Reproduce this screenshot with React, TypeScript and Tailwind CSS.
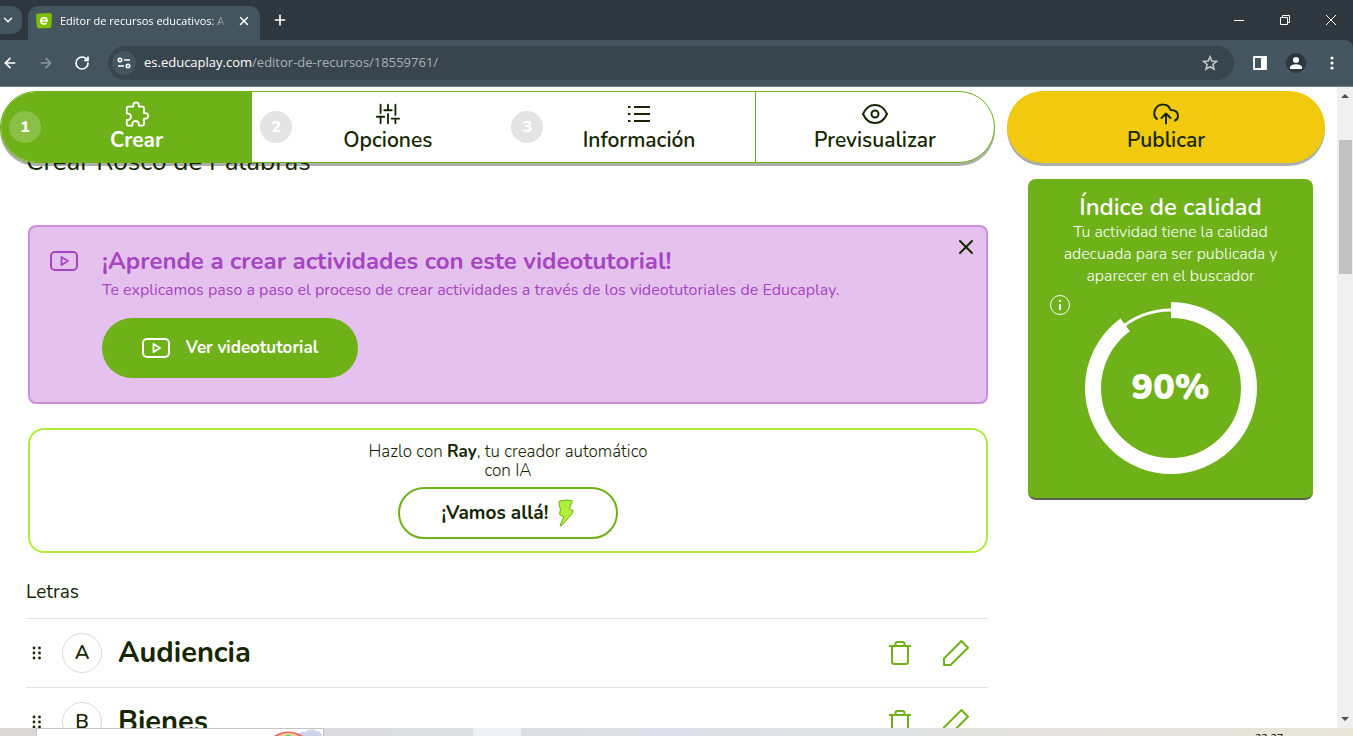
import React from 'react';
import { ArrowLeft, ArrowRight, ChevronDown, Plus, RotateCw, X } from 'lucide-react';

type IconProps = { className?: string };

const PuzzleIcon = ({ className }: IconProps) => (
  <svg viewBox="0 0 26 28" className={className} fill="none" stroke="currentColor" strokeWidth="2" strokeLinejoin="round">
    <path d="M2 9.500V7.500Q2 6 3.500 6H9V4.500a3 3 0 0 1 6 0V6h4Q20.500 6 20.500 7.500V13h1.500a3 3 0 0 1 0 6H20.500v5.500q0 2-1.500 2H15V25a3.500 3.500 0 0 0-7 0v1.500H3.500q-1.500 0-1.500-1.500v-4.500h1a3.500 3.500 0 0 0 0-7H2z" />
  </svg>
);

const SlidersIcon = ({ className }: IconProps) => (
  <svg viewBox="0 0 28 24" className={className} fill="none" stroke="currentColor" strokeWidth="2" strokeLinecap="round">
    <path d="M6 2v9M2 15h8M6 15v7M14 2v6M10 8h8M14 12v10M22 2v11M18 17h8M22 17v5" />
  </svg>
);

const ListIcon = ({ className }: IconProps) => (
  <svg viewBox="0 0 26 24" className={className} fill="none" stroke="currentColor" strokeWidth="2">
    <path d="M2 5h2.500M2 12h2.500M2 19h2.500M8 5h16M8 12h16M8 19h16" />
  </svg>
);

const EyeIcon = ({ className }: IconProps) => (
  <svg viewBox="0 0 26 20" className={className} fill="none" stroke="currentColor" strokeWidth="2" strokeLinejoin="round">
    <path d="M1 10C6.500-2 19.500-2 25 10C19.500 22 6.500 22 1 10Z" />
    <circle cx="13" cy="10" r="3.500" />
  </svg>
);

const CloudIcon = ({ className }: IconProps) => (
  <svg viewBox="0 0 26 22" className={className} fill="none" stroke="currentColor" strokeWidth="2" strokeLinecap="round" strokeLinejoin="round">
    <path d="M4 16C1 14 1 11 1.500 8.500C3 3 7 1 10.500 1.500C14 1.500 16.500 4 17.500 7C22.500 7 25 9.500 25 13C25 15 24 16.500 22 17.500" />
    <path d="M13 20.500V11M8.500 15L13 10.500L17.500 15" />
  </svg>
);

const VideoIcon = ({ className }: IconProps) => (
  <svg viewBox="0 0 28 20" className={className} fill="none" stroke="currentColor" strokeWidth="2" strokeLinejoin="round">
    <rect x="1" y="1" width="26" height="18" rx="4" />
    <path d="M11.500 6L18 10L11.500 14Z" strokeWidth="1.800" />
  </svg>
);

const BoltIcon = ({ className }: IconProps) => (
  <svg viewBox="0 0 16 28" className={className} fill="#b2ef38" stroke="#6eb119" strokeWidth="1" strokeLinejoin="round">
    <path d="M1.500 2Q7 .3 14 1.500Q15 2.500 13.500 4L11.500 9.500Q13 11 15 11.500Q15.500 13 13 16L3 27L2 26.500L6 17.500Q2 17 1.500 15L2.500 10Q1 7 1 4Z" />
  </svg>
);

const TrashIcon = ({ className }: IconProps) => (
  <svg viewBox="0 0 22 24" className={className} fill="none" stroke="currentColor" strokeWidth="2">
    <path d="M0 5h22M6.500 5V3q0-2 2-2h5q2 0 2 2v2M3 5v15.500q0 2.500 2.500 2.500h11q2.500 0 2.500-2.500V5" />
  </svg>
);

const PencilIcon = ({ className }: IconProps) => (
  <svg viewBox="0 0 26 26" className={className} fill="none" stroke="currentColor" strokeWidth="2" strokeLinejoin="round">
    <path d="M1 18.500V25H7.500L25 7.800L18.500 1Z" />
  </svg>
);

const DotsIcon = ({ className }: IconProps) => (
  <svg viewBox="0 0 10 14" className={className} fill="currentColor">
    {[2, 7, 12].map((y) => (
      <React.Fragment key={y}>
        <circle cx="2" cy={y} r="1.400" />
        <circle cx="7.500" cy={y} r="1.400" />
      </React.Fragment>
    ))}
  </svg>
);

const tabs = [
  { step: 1, label: 'Crear', icon: PuzzleIcon, active: true },
  { step: 2, label: 'Opciones', icon: SlidersIcon },
  { step: 3, label: 'Información', icon: ListIcon },
  { label: 'Previsualizar', icon: EyeIcon, divider: true },
];

const words = [
  { letter: 'A', word: 'Audiencia' },
  { letter: 'B', word: 'Bienes' },
];

const BrowserBar = () => (
  <header className="shrink-0 bg-[#2d373d] font-['Open_Sans',sans-serif] text-white">
    <div className="flex h-10 items-end">
      <button aria-label="Buscar pestañas" className="mb-1.5 flex h-7 w-[22px] items-center justify-center rounded-r-[10px] bg-[#44555f]">
        <ChevronDown className="mr-1.5 size-3.5" strokeWidth={2.500} />
      </button>
      <div className="ml-1.5 flex h-[34px] w-[232px] items-center rounded-t-[10px] bg-[#44555f] pr-1.5 pb-1 pl-2">
        <svg viewBox="0 0 16 16" className="size-4 shrink-0">
          <path d="M2 .5L14 0Q16 0 16 2L15.500 13Q15.500 15 13.500 15L3 15.500Q1 15.500 .7 13L0 3Q0 .8 2 .5Z" fill="#7cc000" />
          <path d="M4.800 8h6.300Q11 4.800 8 4.800T4.800 8Q5 11 8 11Q9.500 11 10.600 10.300" fill="none" stroke="#fff" strokeWidth="1.700" />
        </svg>
        <span className="ml-2 w-[168px] overflow-hidden [mask-image:linear-gradient(to_right,black_90%,transparent)] text-[11px] whitespace-nowrap">
          Editor de recursos educativos: A
        </span>
        <button aria-label="Cerrar pestaña" className="ml-auto flex size-5 items-center justify-center">
          <X className="size-3.5" strokeWidth={2.500} />
        </button>
      </div>
      <button aria-label="Nueva pestaña" className="mb-3 ml-3">
        <Plus className="size-4" strokeWidth={2.500} />
      </button>
      <div className="mb-[15px] ml-auto flex items-center gap-9 pr-[17px]">
        <button aria-label="Minimizar">
          <svg viewBox="0 0 10 10" className="size-2.5" stroke="#fff"><path d="M0 5.500h10" /></svg>
        </button>
        <button aria-label="Restaurar">
          <svg viewBox="0 0 10 10" className="size-2.5" fill="none" stroke="#fff"><path d="M.5 2.500h7v7h-7zM2.500 2.500v-2h7v7h-2" /></svg>
        </button>
        <button aria-label="Cerrar">
          <svg viewBox="0 0 10 10" className="size-2.5" stroke="#fff"><path d="M0 0l10 10M10 0L0 10" /></svg>
        </button>
      </div>
    </div>
    <div className="flex h-[47px] items-center rounded-tr-lg border-b border-[#71818b] bg-[#44555f]">
      <button aria-label="Atrás" className="ml-0.5"><ArrowLeft className="size-4" strokeWidth={2.500} /></button>
      <button aria-label="Adelante" className="ml-5 text-[#8a969d]"><ArrowRight className="size-4" strokeWidth={2.500} /></button>
      <button aria-label="Recargar" className="ml-5"><RotateCw className="size-4" strokeWidth={2.500} /></button>
      <div className="ml-[18px] flex h-[34px] flex-1 items-center rounded-full bg-[#39454c] px-1">
        <span className="flex size-6 items-center justify-center rounded-full bg-[#44555f]">
          <svg viewBox="0 0 14 12" className="h-3 w-3.5" fill="none" stroke="#fff" strokeWidth="1.600">
            <circle cx="3" cy="3" r="1.700" /><path d="M7 3h6M1 9h6" /><circle cx="11" cy="9" r="1.700" />
          </svg>
        </span>
        <span className="ml-2 text-[13px] text-[#a9b1b6]">
          <span className="text-white">es.educaplay.com</span>/editor-de-recursos/18559761/
        </span>
        <button aria-label="Añadir a marcadores" className="mr-3 ml-auto">
          <svg viewBox="0 0 16 16" className="size-4" fill="none" stroke="#c3c8cb" strokeWidth="1.600">
            <path d="M8 1.800l1.800 4.200 4.700.4-3.600 3.100 1.100 4.600L8 11.700l-4 2.400 1.100-4.600L1.500 6.400l4.700-.4z" />
          </svg>
        </button>
      </div>
      <button aria-label="Panel lateral" className="ml-[19px]">
        <svg viewBox="0 0 14 14" className="size-3.5"><path d="M1 1h12v12H1z" fill="none" stroke="#fff" strokeWidth="1.800" /><path d="M8 1h5v12H8z" fill="#fff" /></svg>
      </button>
      <button aria-label="Perfil" className="ml-[19px] flex size-5 items-center justify-center rounded-full bg-[#2d373d]">
        <svg viewBox="0 0 12 12" className="size-3" fill="#fff"><circle cx="6" cy="3" r="3" /><path d="M0 12v-2.500Q2 7.200 6 7.200T12 9.500V12z" /></svg>
      </button>
      <button aria-label="Menú" className="mr-[19px] ml-6">
        <svg viewBox="0 0 4 14" className="h-3.5 w-1" fill="#fff"><circle cx="2" cy="2" r="1.600" /><circle cx="2" cy="7" r="1.600" /><circle cx="2" cy="12" r="1.600" /></svg>
      </button>
    </div>
  </header>
);

const StepTabs = () => (
  <div className="relative z-10 flex items-start gap-3 pt-1 pr-3">
    <nav className="grid h-[72px] flex-1 grid-cols-[21fr_21fr_21fr_20fr] overflow-hidden rounded-full border border-[#6eb119] bg-white shadow-[0_3px_0_#14200a5c]">
      {tabs.map((tab) => (
        <a
          key={tab.label}
          href="#"
          className={`flex items-center text-[21px] ${tab.active ? 'bg-[#6eb119] font-bold text-white' : 'font-semibold'} ${tab.divider ? 'border-l border-[#6eb119]' : ''}`}
        >
          {tab.step && (
            <span className={`ml-2 flex size-8 shrink-0 items-center justify-center rounded-full text-base font-extrabold text-white ${tab.active ? 'bg-white/20' : 'bg-[#e4e4e4]'}`}>
              {tab.step}
            </span>
          )}
          <span className={`flex flex-1 flex-col items-center pb-0.5 ${tab.step ? 'pr-5' : ''}`}>
            <span className="flex h-7 items-center">
              <tab.icon className="h-[26px] w-[26px]" />
            </span>
            <span className="leading-6">{tab.label}</span>
          </span>
        </a>
      ))}
    </nav>
    <button className="flex h-[72px] w-[318px] flex-col items-center justify-center rounded-full bg-[#f1c90e] pb-0.5 text-[21px] font-semibold shadow-[0_3px_0_#14200a5c]">
      <span className="flex h-7 items-center">
        <CloudIcon className="h-[22px] w-[26px]" />
      </span>
      <span className="leading-6">Publicar</span>
    </button>
  </div>
);

const TutorialBanner = () => (
  <section className="relative ml-0.5 flex h-[179px] items-start rounded-lg border-2 border-[#cb8edb] bg-[#e5c2ed] px-5 pt-[18px] text-[#a645c3]">
    <VideoIcon className="mt-1.5 h-5 w-7 shrink-0" />
    <div className="ml-6">
      <h2 className="text-2xl leading-8 font-bold">¡Aprende a crear actividades con este videotutorial!</h2>
      <p className="leading-[26px]">Te explicamos paso a paso el proceso de crear actividades a través de los videotutoriales de Educaplay.</p>
      <button className="mt-[15px] flex h-[60px] w-64 items-center justify-center gap-4 rounded-full bg-[#6eb119] text-[17px] font-bold text-white">
        <VideoIcon className="h-5 w-7" />
        Ver videotutorial
      </button>
    </div>
    <button aria-label="Cerrar" className="absolute top-2 right-2 text-[#152600]">
      <X className="size-6" strokeWidth={2} />
    </button>
  </section>
);

const RayBanner = () => (
  <section className="mt-6 ml-0.5 flex h-[125px] flex-col items-center rounded-2xl border-2 border-[#b0ec37] pt-3">
    <p className="w-[300px] text-center text-[17px] leading-[19px] font-light">
      Hazlo con <strong className="font-bold">Ray</strong>, tu creador automático con IA
    </p>
    <button className="mt-[7px] flex h-[52px] w-[220px] items-center justify-center gap-2.5 rounded-full border-2 border-[#6eb119] text-[19px] font-bold">
      ¡Vamos allá!
      <BoltIcon className="h-7 w-4" />
    </button>
  </section>
);

const QualityCard = () => (
  <aside className="flex h-[321px] w-[285px] shrink-0 flex-col rounded-lg border-b-2 border-[#5d6350] bg-[#6eb119] px-6 pt-3.5 text-center text-white">
    <h2 className="text-2xl leading-7 font-semibold">Índice de calidad</h2>
    <p className="leading-[22px] font-light">Tu actividad tiene la calidad adecuada para ser publicada y aparecer en el buscador</p>
    <div className="relative mt-[15px] flex justify-center">
      <button aria-label="Información" className="absolute top-[-7px] left-[-2px]">
        <svg viewBox="0 0 20 20" className="size-5" fill="none" stroke="currentColor">
          <circle cx="10" cy="10" r="9.500" /><path d="M10 9v6M10 5v2" strokeWidth="2" />
        </svg>
      </button>
      <svg viewBox="0 0 172 172" className="size-[172px]" fill="none" stroke="currentColor">
        <circle cx="86" cy="86" r="78" strokeWidth="3" />
        <circle cx="86" cy="86" r="78" strokeWidth="16" pathLength="100" strokeDasharray="90 10" transform="rotate(-90 86 86)" />
      </svg>
      <span className="absolute inset-0 flex items-center justify-center text-4xl font-black">90%</span>
    </div>
  </aside>
);

const WordList = () => (
  <section>
    <h3 className="mt-[25px] text-[19px] leading-7">Letras</h3>
    <ul className="mt-3">
      {words.map((item) => (
        <li key={item.letter} className="flex h-[69px] items-center border-t border-[#e2e2e2] pr-[19px]">
          <button aria-label="Mover" className="ml-1.5"><DotsIcon className="h-3.5 w-2.5" /></button>
          <span className="ml-5 flex size-10 items-center justify-center rounded-full border border-[#d9d9d9] text-xl font-semibold">{item.letter}</span>
          <span className="ml-4 text-[29px] font-bold">{item.word}</span>
          <button aria-label="Eliminar" className="ml-auto text-[#6eb119]"><TrashIcon className="h-6 w-[22px]" /></button>
          <button aria-label="Editar" className="ml-8 text-[#6eb119]"><PencilIcon className="size-[26px]" /></button>
        </li>
      ))}
    </ul>
  </section>
);

const ScrollBar = () => (
  <div className="flex w-4 shrink-0 flex-col items-center bg-[#f0f0f0]">
    <svg viewBox="0 0 8 4" className="mt-[7px] h-1 w-2" fill="#505050"><path d="M0 4L4 0L8 4z" /></svg>
    <div className="mt-[42px] h-[134px] w-[13px] bg-[#c1c1c1]" />
    <svg viewBox="0 0 8 4" className="mt-auto mb-[7px] h-1 w-2" fill="#505050"><path d="M0 0L4 4L8 0z" /></svg>
  </div>
);

const TaskBar = () => (
  <footer className="flex h-2 shrink-0 overflow-hidden bg-linear-to-r from-[#dad7d4] via-[#dde0e8] to-[#e9e5d9] font-['Open_Sans',sans-serif]">
    <div className="ml-9 flex w-72 justify-end border border-b-0 border-[#c4c4c4] bg-white">
      <svg viewBox="0 0 50 8" className="h-2 w-[50px]" fill="none">
        <path d="M24 8Q26 2 32 3Q38-2 43 2Q48 1 49 8z" fill="#cdd3e9" />
        <path d="M1 8Q15-1 30 8" stroke="#ee6367" strokeWidth="2" />
        <path d="M4 9Q15 1 27 9" stroke="#f5d681" strokeWidth="2" />
        <path d="M8 10Q15 4 23 10" stroke="#65b98c" strokeWidth="2" />
      </svg>
    </div>
    <div className="ml-[149px] w-12 bg-[#eff0f5]" />
    <span className="mt-1 mr-[70px] ml-auto text-[11px] leading-3 text-black">22:27</span>
  </footer>
);

export default function App() {
  return (
    <div className="flex h-screen flex-col overflow-hidden bg-white font-['Nunito','Open_Sans',sans-serif] text-[#152600]">
      <BrowserBar />
      <div className="flex min-h-0 flex-1">
        <main className="min-w-0 flex-1 overflow-hidden">
          <StepTabs />
          <div className="flex items-start gap-10 pr-6 pl-[26px]">
            <div className="-mt-[17px] min-w-0 flex-1">
              <h1 className="mb-[47px] text-[26px] leading-8">Crear Rosco de Palabras</h1>
              <TutorialBanner />
              <RayBanner />
              <WordList />
            </div>
            <div className="mt-4">
              <QualityCard />
            </div>
          </div>
        </main>
        <ScrollBar />
      </div>
      <TaskBar />
    </div>
  );
}
